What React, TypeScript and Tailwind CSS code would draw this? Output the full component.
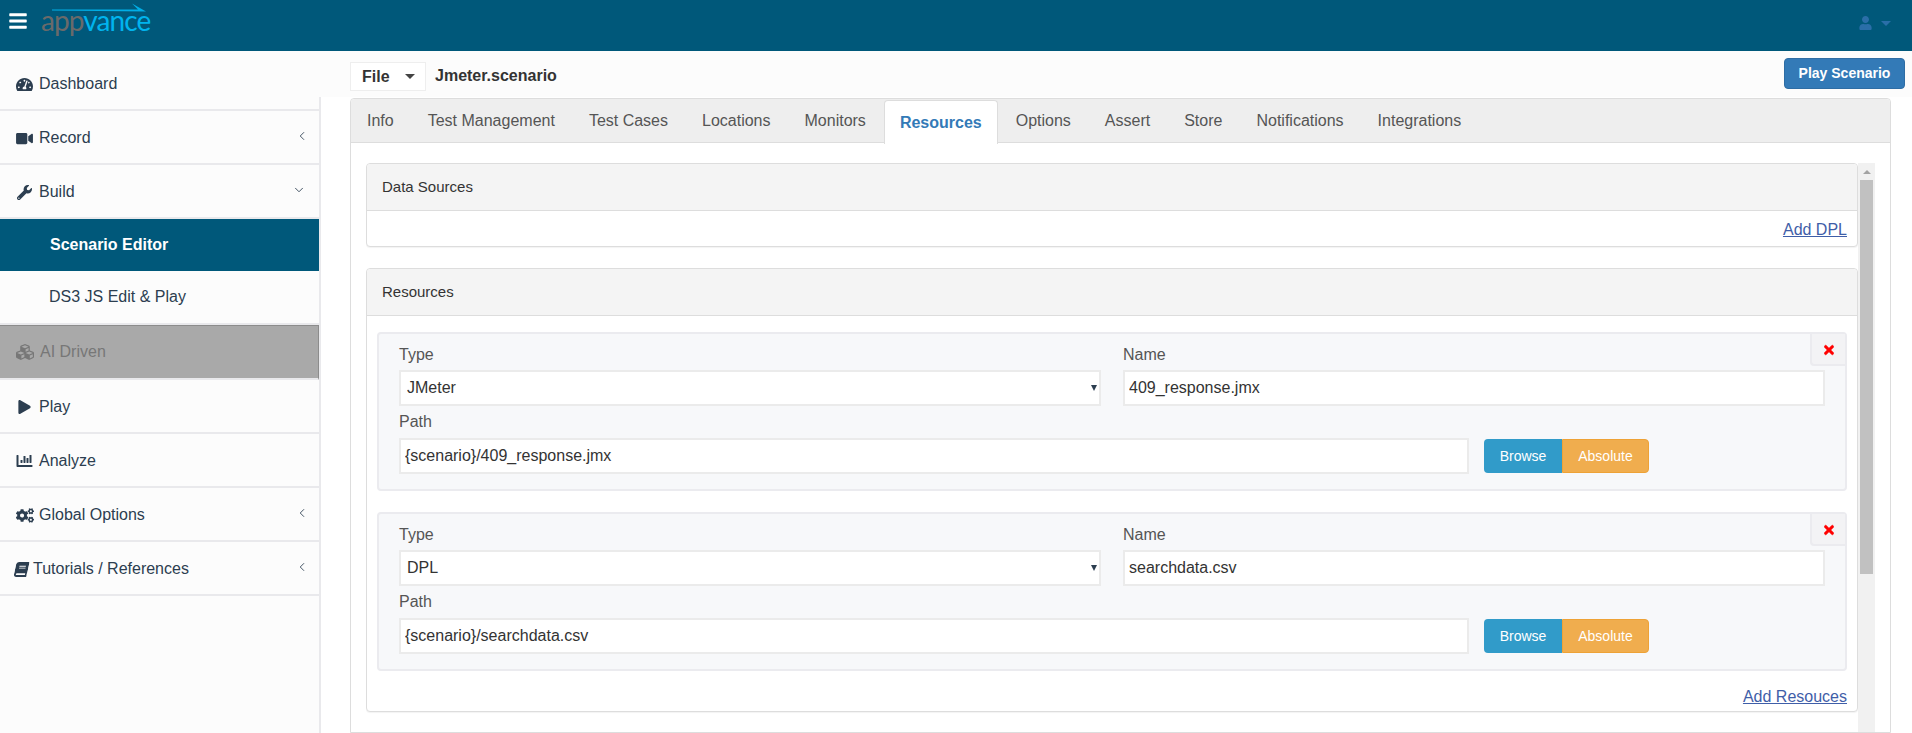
import { FaBars, FaUser, FaTachometerAlt, FaVideo, FaWrench, FaCubes, FaPlay, FaChartBar, FaCogs, FaBook, FaTimes } from 'react-icons/fa';
import { ChevronLeft, ChevronDown } from 'lucide-react';
import type { ReactNode } from 'react';

const tabs = ['Info', 'Test Management', 'Test Cases', 'Locations', 'Monitors', 'Resources', 'Options', 'Assert', 'Store', 'Notifications', 'Integrations'];

function Caret({ color }: { color: string }) {
  return <div className={`w-0 h-0 border-l-[5px] border-r-[5px] border-t-[5px] border-l-transparent border-r-transparent ${color}`} />;
}

function NavRow({ icon, label, arrow, gap = 'gap-[6px]', pad = 'pl-[16px]' }: { icon: ReactNode; label: string; arrow?: 'left' | 'down'; gap?: string; pad?: string }) {
  return (
    <div className={`flex items-center h-[54px] border-b-2 border-[#e9e9ec] pt-[2px] pr-[10px] text-[#2c3e50] ${pad} ${gap}`}>
      {icon}
      <span className="flex-1">{label}</span>
      {arrow === 'left' && <ChevronLeft size={14} strokeWidth={1.5} className="mb-[4px]" />}
      {arrow === 'down' && <ChevronDown size={14} strokeWidth={1.5} className="mr-[3px] mb-[4px]" />}
    </div>
  );
}

function Sidebar() {
  return (
    <div className="w-[319px] shrink-0 bg-[#fcfcfc] pt-[6px] text-[16px]">
      <NavRow icon={<FaTachometerAlt className="w-[17px] h-[17px]" />} label="Dashboard" />
      <NavRow icon={<FaVideo className="w-[17px] h-[15px]" />} label="Record" arrow="left" />
      <NavRow icon={<FaWrench className="w-[15px] h-[15px] mx-[1px]" />} label="Build" arrow="down" />
      <div className="flex items-center h-[52px] bg-[#00587a] pl-[50px] text-white font-bold">Scenario Editor</div>
      <div className="flex items-center h-[54px] border-b-2 border-[#e9e9ec] pl-[49px] text-[#2c3e50]">DS3 JS Edit &amp; Play</div>
      <div className="flex items-center gap-[5px] h-[55px] bg-[#a9a9a9] border-t border-r border-[#8c8c8c] pl-[15px] text-[#777777] border-b-2 border-b-[#e9e9ec]">
        <FaCubes className="w-[20px] h-[18px]" />
        <span>AI Driven</span>
      </div>
      <NavRow icon={<FaPlay className="w-[13px] h-[14px] mr-[3px]" />} label="Play" pad="pl-[18px]" gap="gap-[5px]" />
      <NavRow icon={<FaChartBar className="w-[19px] h-[16px]" />} label="Analyze" pad="pl-[15px]" gap="gap-[5px]" />
      <NavRow icon={<FaCogs className="w-[18px] h-[15px]" />} label="Global Options" arrow="left" gap="gap-[5px]" />
      <NavRow icon={<FaBook className="w-[13px] h-[15px] -skew-x-12" />} label="Tutorials / References" arrow="left" pad="pl-[15px]" gap="gap-[5px]" />
    </div>
  );
}

function Panel({ title, link, footer = 'pt-[8px] pb-[5px]', children }: { title: string; link: string; footer?: string; children?: ReactNode }) {
  return (
    <div className="bg-white border border-[#dddddd] rounded-[4px] shadow-[0_1px_1px_rgba(0,0,0,0.05)]">
      <div className="flex items-center h-[47px] bg-[#f4f4f4] border-b border-[#dddddd] pl-[15px] text-[15px] text-[#333333] rounded-t-[4px]">{title}</div>
      {children}
      <div className={`flex justify-end pr-[10px] leading-[22px] ${footer}`}>
        <a className="text-[16px] text-[#3f5ea8] underline">{link}</a>
      </div>
    </div>
  );
}

function ResourceCard({ type, name, path }: { type: string; name: string; path: string }) {
  const field = 'h-[36px] bg-white border-2 border-[#ebebeb] text-[16px] text-[#333333] outline-none';
  return (
    <div className="relative h-[159px] bg-[#f7f8fa] border-2 border-[#ebebef] rounded-[4px] pl-[20px] pr-[19px] pt-[7px]">
      <div className="absolute top-0 right-0 flex items-center justify-center w-[35px] h-[32px] pt-[2px] bg-[#f3f3f5] border-l-2 border-b-2 border-[#ebebef] rounded-bl-[4px]">
        <FaTimes className="w-[10px] h-[14px] text-[#ff0000] stroke-current stroke-[20]" />
      </div>
      <div className="grid grid-cols-[702px_702px] gap-x-[22px] text-[16px] text-[#555555]">
        <label className="leading-[27px] h-[29px]">Type</label>
        <label className="leading-[27px] h-[29px]">Name</label>
        <div className="relative">
          <select defaultValue={type} className={`${field} w-full pl-[6px] appearance-none`}>
            <option>{type}</option>
          </select>
          <div className="absolute right-[4px] top-[15px] w-0 h-0 border-l-[3px] border-r-[3px] border-t-[6px] border-l-transparent border-r-transparent border-t-[#2c3e50]" />
        </div>
        <input readOnly value={name} className={`${field} w-full px-[4px]`} />
      </div>
      <div className="text-[16px] text-[#555555] leading-[32px] h-[32px]">Path</div>
      <div className="flex items-center">
        <input readOnly value={path} className={`${field} w-[1070px] px-[4px]`} />
        <div className="flex ml-[15px] text-[14px] text-white">
          <span className="flex items-center justify-center w-[78px] h-[34px] bg-[#319bc9] rounded-l-[4px]">Browse</span>
          <span className="flex items-center justify-center w-[87px] h-[34px] bg-[#f0ad4e] border border-[#eea236] rounded-r-[4px]">Absolute</span>
        </div>
      </div>
    </div>
  );
}

function Scrollbar() {
  return (
    <div className="w-[17px] shrink-0 bg-[#f1f1f1] flex flex-col items-center">
      <div className="h-[17px] flex items-center justify-center">
        <div className="w-0 h-0 border-l-[4px] border-r-[4px] border-b-[4px] border-l-transparent border-r-transparent border-b-[#a3a3a3]" />
      </div>
      <div className="w-[13px] h-[394px] bg-[#c1c1c1]" />
    </div>
  );
}

export default function App() {
  return (
    <div className="h-[733px] flex flex-col overflow-hidden bg-white font-['Liberation_Sans',Arial,sans-serif]">
      <header className="flex items-start justify-between h-[51px] shrink-0 bg-[#00587a]">
        <div className="flex items-start">
          <FaBars className="w-[18px] h-[20px] mt-[11px] ml-[9px] text-white" />
          <div className="relative ml-[14px] mt-[3px] w-[110px] h-[30px]">
            <span className="absolute left-0 top-[1px] text-[28px] leading-[32px] font-normal tracking-[-0.9px] font-['Lato',sans-serif]">
              <span className="text-[#6a6a6a]">app</span>
              <span className="text-[#00b4ee]">vance</span>
            </span>
            <svg className="absolute top-0 left-0" width="110" height="10" viewBox="0 0 110 10">
              <path d="M11 6.5 L97 6.5 L91 0.5 L105 8.5 L11 7.5 Z" fill="#00aee6" />
            </svg>
          </div>
        </div>
        <div className="flex items-center gap-[9px] mt-[16px] mr-[21px] text-[#2a6ea8]">
          <FaUser className="w-[13px] h-[14px]" />
          <Caret color="border-t-[#2a6ea8]" />
        </div>
      </header>

      <div className="flex flex-1 min-h-0 bg-[#fcfcfc]">
        <Sidebar />
        <main className="flex flex-col flex-1 min-w-0">
          <div className="flex items-start h-[46px] shrink-0 pl-[31px] pr-[7px]">
            <div className="flex items-center justify-between w-[76px] h-[29px] mt-[11px] pl-[11px] pr-[10px] bg-white border border-[#eeeeee] text-[16px] font-bold text-[#333333]">
              File
              <Caret color="border-t-[#444444]" />
            </div>
            <div className="ml-[9px] mt-[14px] text-[16px] leading-[22px] font-bold text-[#333333]">Jmeter.scenario</div>
            <button className="ml-auto mt-[7px] w-[121px] h-[31px] bg-[#337ab7] border border-[#2e6da4] rounded-[4px] text-[14px] font-bold text-white">Play Scenario</button>
          </div>

          <div className="flex-1 min-h-0 bg-white border-l-2 border-[#e9e9ec] pl-[29px] pr-[21px] pt-[1px]">
            <div className="h-full bg-white border border-[#dddddd] rounded-t-[4px] flex flex-col">
              <div className="flex h-[44px] shrink-0 bg-[#eeeeee] border-b border-[#dddddd] text-[16px] text-[#555555] rounded-t-[4px]">
                {tabs.map((tab, i) =>
                  tab === 'Resources' ? (
                    <div key={tab} className="h-[44px] mt-[1px] px-[15px] mx-[1px] flex items-center bg-white border border-b-0 border-[#dddddd] rounded-t-[4px] font-bold text-[#337ab7]">{tab}</div>
                  ) : (
                    <div key={tab} className={i === 0 ? 'h-[43px] pl-[16px] pr-[16px] mr-[1px] flex items-center' : 'h-[43px] px-[16px] mx-[1px] flex items-center'}>{tab}</div>
                  ),
                )}
              </div>
              <div className="flex flex-1 min-h-0 pl-[15px] pr-[15px] pt-[20px]">
                <div className="flex-1 min-w-0 overflow-hidden">
                  <Panel title="Data Sources" link="Add DPL" />
                  <div className="h-[21px]" />
                  <Panel title="Resources" link="Add Resouces" footer="pt-[10px] pb-[3px]">
                    <div className="flex flex-col gap-[21px] pl-[10px] pr-[10px] pt-[16px] pb-[5px]">
                      <ResourceCard type="JMeter" name="409_response.jmx" path="{scenario}/409_response.jmx" />
                      <ResourceCard type="DPL" name="searchdata.csv" path="{scenario}/searchdata.csv" />
                    </div>
                  </Panel>
                </div>
                <Scrollbar />
              </div>
            </div>
          </div>
        </main>
      </div>
    </div>
  );
}
